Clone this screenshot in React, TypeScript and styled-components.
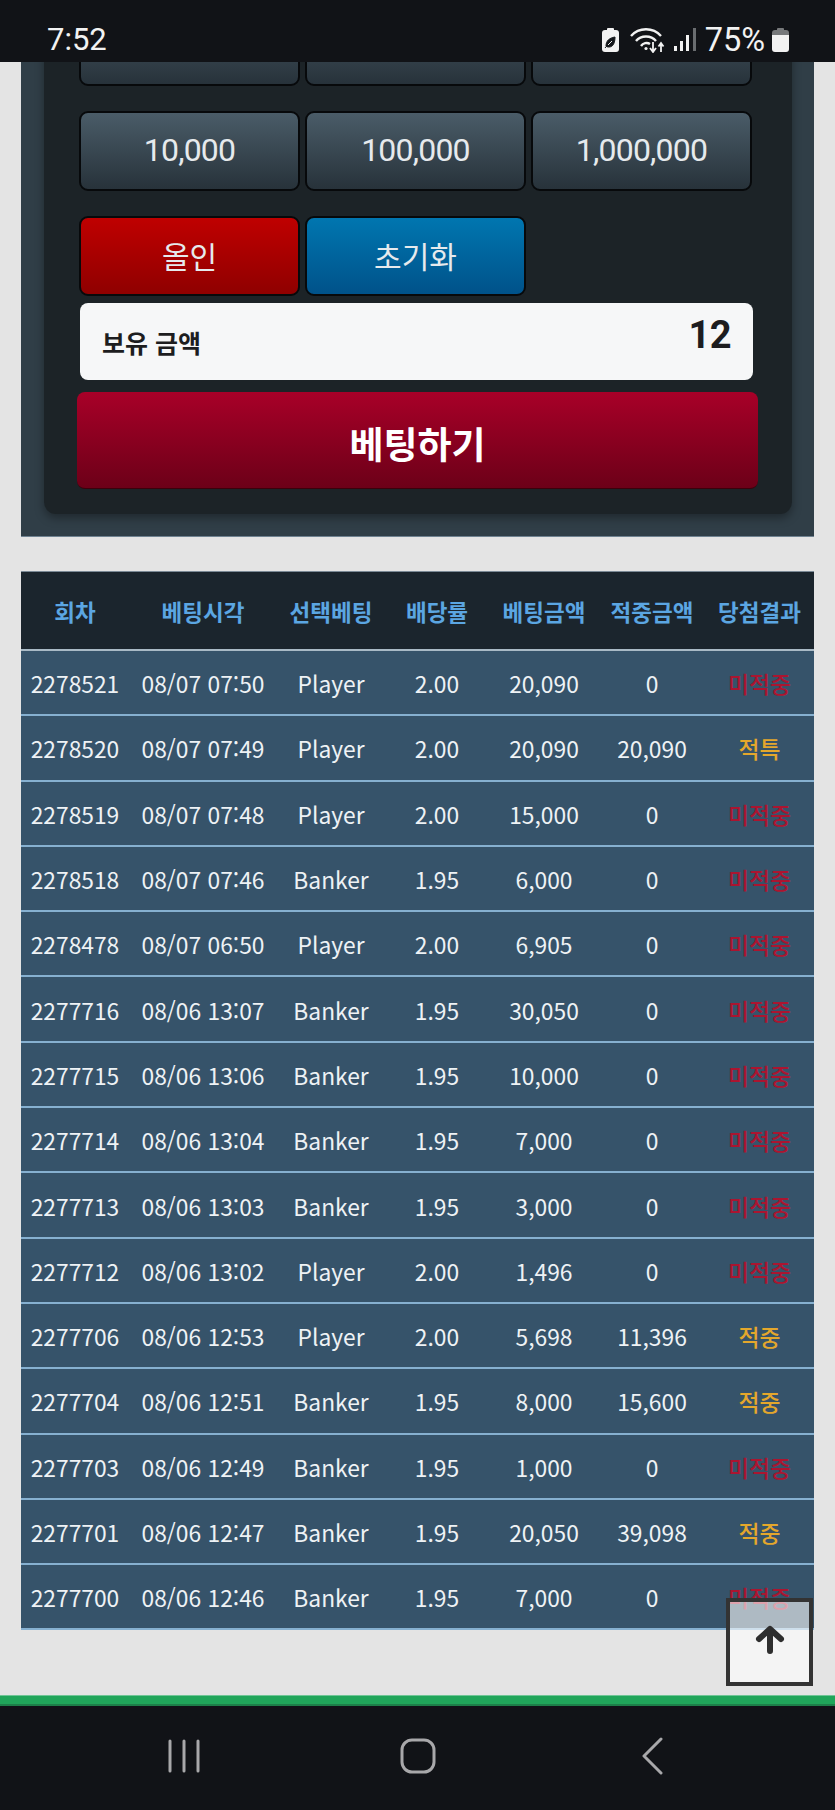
import React from "react";
import styled, { createGlobalStyle } from "styled-components";

const GlobalStyle = createGlobalStyle`
  html, body {
    margin: 0;
    padding: 0;
    background: #e4e4e4;
  }
  * {
    box-sizing: border-box;
  }
`;

const amounts = ["", "", "", "10,000", "100,000", "1,000,000"];

const bets = [
  ["2278521", "08/07 07:50", "Player", "2.00", "20,090", "0", "미적중"],
  ["2278520", "08/07 07:49", "Player", "2.00", "20,090", "20,090", "적특"],
  ["2278519", "08/07 07:48", "Player", "2.00", "15,000", "0", "미적중"],
  ["2278518", "08/07 07:46", "Banker", "1.95", "6,000", "0", "미적중"],
  ["2278478", "08/07 06:50", "Player", "2.00", "6,905", "0", "미적중"],
  ["2277716", "08/06 13:07", "Banker", "1.95", "30,050", "0", "미적중"],
  ["2277715", "08/06 13:06", "Banker", "1.95", "10,000", "0", "미적중"],
  ["2277714", "08/06 13:04", "Banker", "1.95", "7,000", "0", "미적중"],
  ["2277713", "08/06 13:03", "Banker", "1.95", "3,000", "0", "미적중"],
  ["2277712", "08/06 13:02", "Player", "2.00", "1,496", "0", "미적중"],
  ["2277706", "08/06 12:53", "Player", "2.00", "5,698", "11,396", "적중"],
  ["2277704", "08/06 12:51", "Banker", "1.95", "8,000", "15,600", "적중"],
  ["2277703", "08/06 12:49", "Banker", "1.95", "1,000", "0", "미적중"],
  ["2277701", "08/06 12:47", "Banker", "1.95", "20,050", "39,098", "적중"],
  ["2277700", "08/06 12:46", "Banker", "1.95", "7,000", "0", "미적중"],
];

const headers = ["회차", "베팅시각", "선택베팅", "배당률", "베팅금액", "적중금액", "당첨결과"];

const App = () => {
  return (
    <Screen lang="ko">
      <GlobalStyle />
      <StatusBar>
        <Clock>7:52</Clock>
        <StatusIcons>
          <svg width="17" height="24" viewBox="0 0 17 24">
            <rect x="5" y="0" width="7" height="3" rx="1" fill="#f2f2f2" />
            <rect x="0" y="2" width="17" height="22" rx="3" fill="#f2f2f2" />
            <path d="M4 18c0-5 3-8 9-9 0 6-2 10-6 10-1 0-2 0-3-1zM3 20l5-6" fill="#14171b" stroke="#14171b" strokeWidth="1" />
            <path d="M6 17l4-4" stroke="#f2f2f2" strokeWidth="1" />
          </svg>
          <WifiIcon width="35" height="26" viewBox="0 0 35 26">
            <path d="M1 9C9 0 23 0 31 9" fill="none" stroke="#f2f2f2" strokeWidth="2.4" />
            <path d="M6 14c5-6 15-6 20 0" fill="none" stroke="#f2f2f2" strokeWidth="2.4" />
            <path d="M11 19c2-3 6-4 9-2" fill="none" stroke="#f2f2f2" strokeWidth="2.4" />
            <circle cx="16" cy="21.5" r="1.6" fill="#f2f2f2" />
            <path d="M23 15v9M20 21l3 4 3-4" fill="none" stroke="#f2f2f2" strokeWidth="1.8" />
            <path d="M31 25v-8M28.500 19.500l2.500-3.500 2.500 3.500" fill="none" stroke="#f2f2f2" strokeWidth="1.8" />
          </WifiIcon>
          <SignalIcon width="22" height="24" viewBox="0 0 22 24">
            <rect x="0" y="18" width="3" height="5" fill="#f2f2f2" />
            <rect x="6" y="13" width="3" height="10" fill="#f2f2f2" />
            <rect x="12" y="7" width="3" height="16" fill="#f2f2f2" />
            <rect x="19" y="0" width="3" height="23" fill="#6a6d70" />
          </SignalIcon>
          <Percent>75%</Percent>
          <svg width="17" height="24" viewBox="0 0 17 24">
            <rect x="5" y="0" width="7" height="3" rx="1" fill="#77797b" />
            <path d="M0 7V5a3 3 0 0 1 3-3h11a3 3 0 0 1 3 3v2z" fill="#77797b" />
            <path d="M0 7h17v14a3 3 0 0 1-3 3H3a3 3 0 0 1-3-3z" fill="#f2f2f2" />
          </svg>
        </StatusIcons>
      </StatusBar>

      <Main>
        <Panel>
          <InnerPanel>
            <AmountGrid>
              {amounts.map((amount, i) => (
                <AmountButton key={i}>{amount}</AmountButton>
              ))}
              <AllInButton>올인</AllInButton>
              <ResetButton>초기화</ResetButton>
            </AmountGrid>
            <BalanceBox>
              <BalanceLabel>보유 금액</BalanceLabel>
              <BalanceValue>12</BalanceValue>
            </BalanceBox>
            <BetButton>베팅하기</BetButton>
          </InnerPanel>
        </Panel>

        <HistoryTable>
          <HeaderRow>
            {headers.map((h) => (
              <HeaderCell key={h}>{h}</HeaderCell>
            ))}
          </HeaderRow>
          {bets.map((row) => (
            <Row key={row[0]}>
              {row.slice(0, 6).map((value, i) => (
                <Cell key={i}>{value}</Cell>
              ))}
              <ResultCell $win={row[6] !== "미적중"}>{row[6]}</ResultCell>
            </Row>
          ))}
        </HistoryTable>

        <TopButton>
          <svg width="30" height="30" viewBox="0 0 30 30">
            <path d="M15 26V5M4 14L15 4l11 10" fill="none" stroke="#2e2e2e" strokeWidth="6" strokeLinecap="round" strokeLinejoin="round" />
          </svg>
        </TopButton>
      </Main>

      <GreenBar />

      <NavBar>
        <svg width="32" height="34" viewBox="0 0 32 34">
          <path d="M2 2v30M16 2v30M30 2v30" stroke="#a8a8aa" strokeWidth="3" strokeLinecap="round" />
        </svg>
        <svg width="36" height="36" viewBox="0 0 36 36">
          <rect x="2" y="2" width="32" height="32" rx="10" fill="none" stroke="#a8a8aa" strokeWidth="3" />
        </svg>
        <svg width="22" height="38" viewBox="0 0 22 38">
          <path d="M20 2L3 19l17 17" fill="none" stroke="#a8a8aa" strokeWidth="3" strokeLinecap="round" strokeLinejoin="round" />
        </svg>
      </NavBar>
    </Screen>
  );
};

export default App;

const Screen = styled.div`
  width: 835px;
  height: 1810px;
  display: flex;
  flex-direction: column;
  overflow: hidden;
  background: #e4e4e4;
  font-family: "Noto Sans CJK KR", "Noto Sans", sans-serif;
`;

const StatusBar = styled.div`
  height: 62px;
  flex-shrink: 0;
  background: #111317;
  color: #f2f2f2;
  display: flex;
  justify-content: space-between;
  align-items: flex-start;
  padding: 23px 46px 0 47px;
  font-family: Roboto, sans-serif;
`;

const Clock = styled.div`
  font-size: 31px;
  line-height: 34px;
`;

const StatusIcons = styled.div`
  display: flex;
  align-items: center;
  height: 34px;
`;

const WifiIcon = styled.svg`
  margin-left: 11px;
`;

const SignalIcon = styled.svg`
  margin-left: 9px;
`;

const Percent = styled.div`
  font-size: 32.500px;
  line-height: 34px;
  margin: 0 7px 0 9px;
`;

const Main = styled.div`
  position: relative;
  flex: 1;
  min-height: 0;
  overflow: hidden;
  padding: 0 21px;
`;

const Panel = styled.div`
  margin-top: -56px;
  background: #303e47;
  padding: 0 22px 22px 23px;
  border-bottom: 1px solid #6f8291;
`;

const InnerPanel = styled.div`
  background: #1c2327;
  border-radius: 0 0 12px 12px;
  padding: 0 40px 25px 35px;
  box-shadow: 0 4px 10px rgba(0, 0, 0, 0.35);
`;

const AmountGrid = styled.div`
  display: grid;
  grid-template-columns: repeat(3, 1fr);
  grid-auto-rows: 80px;
  gap: 25px 5px;
`;

const GridButton = styled.div`
  display: flex;
  align-items: center;
  justify-content: center;
  border: 2px solid #07090b;
  border-radius: 9px;
  color: #e6eaed;
  padding-bottom: 3px;
  font-family: Roboto, "Noto Sans CJK KR", sans-serif;
`;

const AmountButton = styled(GridButton)`
  font-size: 32px;
  letter-spacing: -0.8px;
  background: linear-gradient(#4a5c68, #27323a);
`;

const AllInButton = styled(GridButton)`
  font-size: 30px;
  background: linear-gradient(#bf0000, #8f0000);
`;

const ResetButton = styled(GridButton)`
  font-size: 30px;
  background: linear-gradient(#0076b0, #00528a);
`;

const BalanceBox = styled.div`
  margin-top: 7px;
  height: 77px;
  margin-right: -1px;
  margin-left: 1px;
  padding: 0 22px 0 22px;
  background: #f6f7f8;
  border-radius: 8px;
  display: flex;
  justify-content: space-between;
  color: #1d1d1f;
`;

const BalanceLabel = styled.div`
  margin-top: 21px;
  font-size: 25px;
  line-height: 36px;
  font-weight: 700;
`;

const BalanceValue = styled.div`
  margin-top: 11px;
  font-size: 38px;
  line-height: 42px;
  letter-spacing: -0.5px;
  font-weight: 700;
  font-family: Roboto, sans-serif;
`;

const BetButton = styled.div`
  margin: 12px -6px 0 -2px;
  height: 97px;
  padding-top: 5px;
  display: flex;
  align-items: center;
  justify-content: center;
  border-radius: 8px;
  border-bottom: 1px solid #3c000c;
  background: linear-gradient(#a80028, #6c0018);
  color: #fff;
  font-size: 37px;
  font-weight: 700;
`;

const HistoryTable = styled.div`
  margin-top: 34px;
`;

const columns = "108px 148px 108px 104px 110px 106px 109px";

const HeaderRow = styled.div`
  display: grid;
  grid-template-columns: ${columns};
  height: 80px;
  align-items: center;
  background: #1b252d;
  border-top: 1px solid #7b8a96;
  border-bottom: 2px solid #a9bac6;
`;

const HeaderCell = styled.div`
  text-align: center;
  color: #5ba6e2;
  font-size: 22.500px;
  font-weight: 700;
`;

const Row = styled.div`
  display: grid;
  grid-template-columns: ${columns};
  height: 65.300px;
  align-items: center;
  background: #36536a;
  border-bottom: 2px solid #86b0d0;
`;

const Cell = styled.div`
  text-align: center;
  color: #eef2f5;
  font-size: 22.800px;
  padding-top: 2px;
`;

const ResultCell = styled(Cell)<{ $win: boolean }>`
  font-weight: 500;
  color: ${(p) => (p.$win ? "#e4a72c" : "#ab1530")};
`;

const TopButton = styled.div`
  position: absolute;
  left: 726px;
  top: 1536px;
  width: 87px;
  height: 88px;
  border: 4px solid #333;
  background: rgba(255, 255, 255, 0.6);
  display: flex;
  justify-content: center;
  padding-top: 23px;
`;

const GreenBar = styled.div`
  height: 11px;
  flex-shrink: 0;
  background: #20a55a;
  border-top: 1px solid #6fc596;
  border-bottom: 2px solid #1d7f49;
`;

const NavBar = styled.div`
  height: 104px;
  flex-shrink: 0;
  background: #111317;
  display: grid;
  grid-template-columns: repeat(3, 234px);
  justify-content: center;
  justify-items: center;
  align-items: center;
  padding-bottom: 4px;
`;
